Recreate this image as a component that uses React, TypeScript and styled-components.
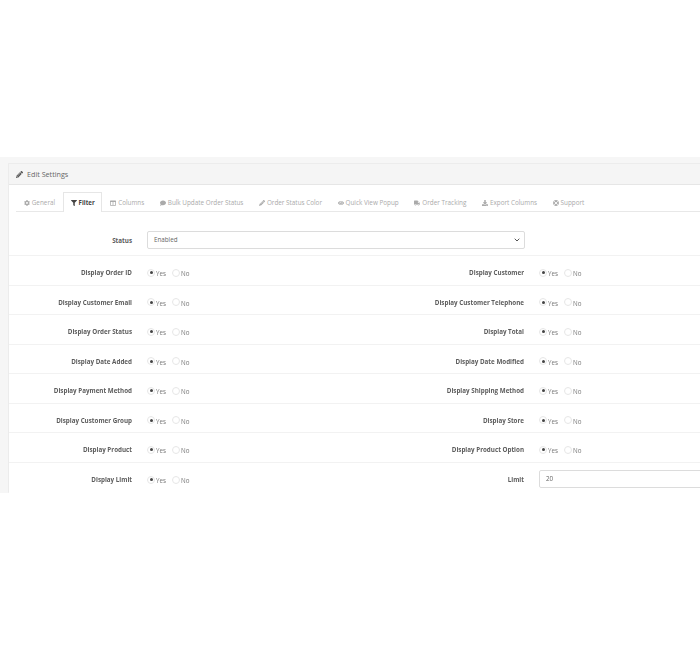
import styled, { createGlobalStyle } from 'styled-components';
import { FaPencilAlt, FaCog, FaFilter, FaColumns, FaComment, FaEye, FaTruck, FaDownload, FaLifeRing } from 'react-icons/fa';

const GlobalStyle = createGlobalStyle`
  html, body {
    margin: 0;
    background: #fff;
    overflow: hidden;
  }
  body {
    font-family: "Open Sans", "Liberation Sans", sans-serif;
    color: #666;
  }
`;

const Page = styled.div`
  width: 700px;
  height: 650px;
  padding-top: 157px;
  box-sizing: border-box;
  overflow: hidden;
`;

const Band = styled.div`
  height: 336px;
  padding: 6px 0 0 8px;
  box-sizing: border-box;
  background: #f6f6f6;
  overflow: hidden;
`;

const Panel = styled.div`
  width: 740px;
  height: 100%;
  background: #fff;
  border: 1px solid #ececec;
  border-bottom: none;
  border-radius: 1px;
  box-sizing: border-box;
  filter: blur(0.3px);
  will-change: filter;
`;

const PanelHeading = styled.div`
  height: 21px;
  padding-left: 7px;
  display: flex;
  align-items: center;
  gap: 4px;
  box-sizing: border-box;
  background: #f5f5f5;
  border-bottom: 1px solid #e6e6e6;
  font-size: 7.2px;
  color: #666;

  svg {
    font-size: 7px;
    color: #555;
  }
`;

const PanelBody = styled.div`
  padding-top: 7px;
`;

const Tabs = styled.div`
  display: flex;
  height: 20px;
  margin-left: 7px;
  box-sizing: border-box;
  border-bottom: 1px solid #e8e8e8;
`;

const Tab = styled.div<{ $active?: boolean }>`
  height: 20px;
  padding: 0 6.75px;
  display: flex;
  align-items: center;
  gap: 2px;
  box-sizing: border-box;
  font-size: ${(p) => (p.$active ? 6.1 : 6.35)}px;
  white-space: nowrap;
  color: ${(p) => (p.$active ? '#444' : '#aaa')};
  font-weight: ${(p) => (p.$active ? 700 : 400)};
  background: ${(p) => (p.$active ? '#fff' : 'transparent')};
  border: 1px solid ${(p) => (p.$active ? '#e6e6e6' : 'transparent')};
  border-bottom: none;

  svg {
    font-size: 6px;
  }
`;

const Row = styled.div<{ $height?: number; $top?: number }>`
  display: flex;
  height: ${(p) => p.$height ?? 29.5}px;
  padding-top: ${(p) => p.$top ?? 5}px;
  box-sizing: border-box;
  border-bottom: 1px solid #f2f2f2;

  &:last-child {
    border-bottom: none;
  }
`;

const Cell = styled.div<{ $wide?: boolean }>`
  width: ${(p) => (p.$wide ? '100%' : '392px')};
  flex: none;
  display: flex;
  align-items: center;
`;

const Label = styled.div`
  width: 123px;
  flex: none;
  text-align: right;
  font-size: 6.25px;
  font-weight: 700;
  color: #5c5c5c;
  white-space: nowrap;
`;

const Control = styled.div`
  margin-left: 15px;
  display: flex;
  align-items: center;
`;

const Radio = styled.span<{ $checked?: boolean }>`
  width: 8px;
  height: 8px;
  box-sizing: border-box;
  border-radius: 50%;
  border: 1px solid #e6e6e6;
  background: #fff;
  display: flex;
  align-items: center;
  justify-content: center;

  &::after {
    content: '';
    width: 3px;
    height: 3px;
    border-radius: 50%;
    background: ${(p) => (p.$checked ? '#444' : 'transparent')};
  }
`;

const RadioText = styled.span`
  font-size: 6.25px;
  color: #777;
  margin: 2px 6px 0 1px;
`;

const SelectBox = styled.div`
  width: 378px;
  height: 18px;
  margin: -2px 0 0 15px;
  padding: 0 4px 0 6px;
  display: flex;
  align-items: center;
  justify-content: space-between;
  box-sizing: border-box;
  border: 1px solid #dcdcdc;
  border-radius: 2px;
  font-size: 6.25px;
  color: #666;
`;

const InputBox = styled.div`
  width: 200px;
  height: 18px;
  margin: -2px 0 0 15px;
  padding-left: 6px;
  display: flex;
  align-items: center;
  box-sizing: border-box;
  border: 1px solid #dcdcdc;
  border-radius: 2px;
  font-size: 6.25px;
  color: #666;
`;

const tabs = [
  { icon: <FaCog />, text: 'General' },
  { icon: <FaFilter />, text: 'Filter', active: true },
  { icon: <FaColumns />, text: 'Columns' },
  { icon: <FaComment />, text: 'Bulk Update Order Status' },
  { icon: <FaPencilAlt />, text: 'Order Status Color' },
  { icon: <FaEye />, text: 'Quick View Popup' },
  { icon: <FaTruck />, text: 'Order Tracking' },
  { icon: <FaDownload />, text: 'Export Columns' },
  { icon: <FaLifeRing />, text: 'Support' },
];

const rows = [
  ['Display Order ID', 'Display Customer'],
  ['Display Customer Email', 'Display Customer Telephone'],
  ['Display Order Status', 'Display Total'],
  ['Display Date Added', 'Display Date Modified'],
  ['Display Payment Method', 'Display Shipping Method'],
  ['Display Customer Group', 'Display Store'],
  ['Display Product', 'Display Product Option'],
];

function YesNo() {
  return (
    <Control>
      <Radio $checked />
      <RadioText>Yes</RadioText>
      <Radio />
      <RadioText>No</RadioText>
    </Control>
  );
}

function App() {
  return (
    <Page>
      <GlobalStyle />
      <Band>
        <Panel>
          <PanelHeading>
            <FaPencilAlt />
            Edit Settings
          </PanelHeading>
          <PanelBody>
            <Tabs>
              {tabs.map((t) => (
                <Tab key={t.text} $active={t.active}>
                  {t.icon}
                  {t.text}
                </Tab>
              ))}
            </Tabs>
            <Row $height={44} $top={14}>
              <Cell $wide>
                <Label>Status</Label>
                <SelectBox>
                  Enabled
                  <svg width="6" height="4" viewBox="0 0 6 4">
                    <path d="M0.7 0.7 L3 3 L5.3 0.7" fill="none" stroke="#555" strokeWidth="1" />
                  </svg>
                </SelectBox>
              </Cell>
            </Row>
            {rows.map(([left, right]) => (
              <Row key={left}>
                <Cell>
                  <Label>{left}</Label>
                  <YesNo />
                </Cell>
                <Cell>
                  <Label>{right}</Label>
                  <YesNo />
                </Cell>
              </Row>
            ))}
            <Row>
              <Cell>
                <Label>Display Limit</Label>
                <YesNo />
              </Cell>
              <Cell>
                <Label>Limit</Label>
                <InputBox>20</InputBox>
              </Cell>
            </Row>
          </PanelBody>
        </Panel>
      </Band>
    </Page>
  );
}

export default App;
